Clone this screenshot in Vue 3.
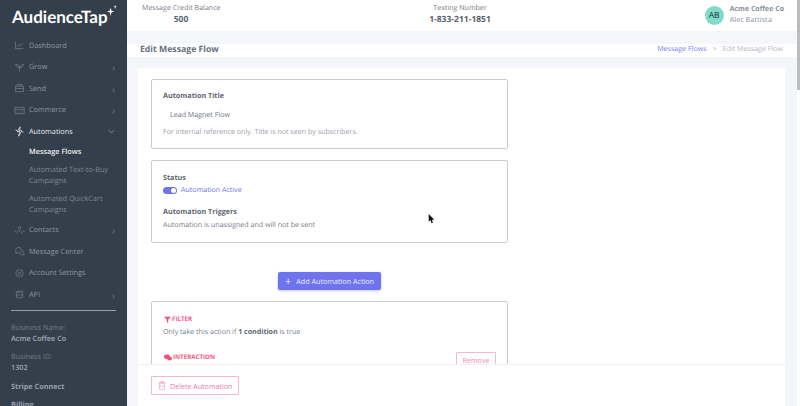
<script setup>
const navTop = [
  { label: 'Dashboard', icon: 'M2 2v9h10M4 8l2-2 2 1 3-3', arrow: false },
  { label: 'Grow', icon: 'M7 12V7M7 7C5 7 3 6 2 3c3 0 5 1 5 4zM7 7c1-2 2-3 5-4 0 3-2 4-5 4z', arrow: true },
  { label: 'Send', icon: 'M2 4h10v7H2zM2 7h10M4 4V2h6v2', arrow: true },
  { label: 'Commerce', icon: 'M1 3h12v8H1zM1 6h12M4 9h1M8 9h2', arrow: true }
]
const navBottom = [
  { label: 'Contacts', icon: 'M7 5a1.5 1.5 0 1 0 0-3 1.5 1.5 0 0 0 0 3zM4 11c0-2 1-4 3-4s3 2 3 4M1 9c0-1 1-2 2-2M13 9c0-1-1-2-2-2', arrow: true },
  { label: 'Message Center', icon: 'M6 2c2.500 0 4 1.500 4 3.500S8.500 9 6 9H2l1-1.500C2 7 2 6 2 5.500 2 3.500 3.500 2 6 2zM11 6c1.500.5 2 2 1.500 3.500l.5 2-2-.5c-1 .5-2.500.3-3.500-.5', arrow: false },
  { label: 'Account Settings', icon: 'M7 1.500l1.500 1.500h2v2L12 7l-1.500 1.500v2h-2L7 12l-1.500-1.500h-2v-2L2 7l1.500-2v-2h2zM7 5.500a1.500 1.500 0 1 0 0 3 1.500 1.500 0 0 0 0-3z', arrow: false },
  { label: 'API', icon: 'M3 3.500C3 2.500 11 2.500 11 3.500v7c0 1-8 1-8 0zM3 3.500c0 1 8 1 8 0M3 7c0 1 8 1 8 0', arrow: true }
]
</script>

<template>
  <div class="app">
    <aside class="sidebar">
      <div class="logo">AudienceTap<svg class="spark" viewBox="0 0 12 12" width="11" height="11"><path d="M5 3l1 3.200L9.200 7 6 8 5 12 4 8 .8 7 4 6.200zM10 0l.5 1.500L12 2l-1.500.5L10 4l-.5-1.500L8 2l1.500-.5z" fill="#fff" /></svg></div>

      <nav class="nav">
        <div v-for="item in navTop" :key="item.label" class="nav-item">
          <svg class="nav-icon" viewBox="0 0 14 14" width="12" height="12"><path :d="item.icon" /></svg>
          <span class="nav-label">{{ item.label }}</span>
          <span v-if="item.arrow" class="chevron">›</span>
        </div>
        <div class="nav-item active">
          <svg class="nav-icon" viewBox="0 0 14 14" width="12" height="12"><path d="M8 1L4 7h3l-1 6 4-7H7zM2 5l2 1M12 8l-2-1" /></svg>
          <span class="nav-label">Automations</span>
          <svg class="chevron-down" viewBox="0 0 8 5" width="7" height="5"><path d="M1 1l3 3 3-3" /></svg>
        </div>
        <div class="sub current">Message Flows</div>
        <div class="sub">Automated Text-to-Buy Campaigns</div>
        <div class="sub last">Automated QuickCart Campaigns</div>
        <div v-for="item in navBottom" :key="item.label" class="nav-item">
          <svg class="nav-icon" viewBox="0 0 14 14" width="12" height="12"><path :d="item.icon" /></svg>
          <span class="nav-label">{{ item.label }}</span>
          <span v-if="item.arrow" class="chevron">›</span>
        </div>
      </nav>

      <div class="side-info">
        <div class="info-label">Business Name:</div>
        <div class="info-value">Acme Coffee Co</div>
        <div class="info-label second">Business ID:</div>
        <div class="info-value">1302</div>
        <div class="info-link first">Stripe Connect</div>
        <div class="info-link">Billing</div>
      </div>
    </aside>

    <div class="main">
      <header class="topbar">
        <div class="stat credit">
          <div class="stat-label">Message Credit Balance</div>
          <div class="stat-value">500</div>
        </div>
        <div class="stat number">
          <div class="stat-label">Texting Number</div>
          <div class="stat-value">1-833-211-1851</div>
        </div>
        <div class="account">
          <div class="avatar">AB</div>
          <div>
            <div class="acct-name">Acme Coffee Co</div>
            <div class="acct-user">Alec Battista</div>
          </div>
        </div>
      </header>

      <div class="page-head">
        <h1>Edit Message Flow</h1>
        <div class="crumbs">
          <span class="crumb-link">Message Flows</span>
          <span class="crumb-sep">&gt;</span>
          <span>Edit Message Flow</span>
        </div>
      </div>

      <div class="content">
        <div class="scroll-area">
          <section class="box title-box">
            <h3>Automation Title</h3>
            <div class="title-value">Lead Magnet Flow</div>
            <p class="hint">For internal reference only. Title is not seen by subscribers.</p>
          </section>

          <section class="box status-box">
            <h3>Status</h3>
            <div class="status-row">
              <span class="toggle"><span class="knob"></span></span>
              <span>Automation Active</span>
            </div>
            <h3 class="triggers">Automation Triggers</h3>
            <p class="body-text">Automation is unassigned and will not be sent</p>
          </section>

          <div class="add-wrap">
            <button class="add-btn"><span class="plus">+</span>Add Automation Action</button>
          </div>

          <section class="box action-box">
            <div class="tag">
              <svg viewBox="0 0 10 10" width="7" height="7"><path d="M0 1h10L6 5.500V10L4 8.500v-3z" fill="#f0527f" /></svg>
              FILTER
            </div>
            <p class="body-text">Only take this action if <b>1 condition</b> is true</p>
            <div class="tag interaction">
              <svg viewBox="0 0 12 10" width="8" height="7"><ellipse cx="4.500" cy="4" rx="4.500" ry="3.500" fill="#f0527f" /><ellipse cx="8.500" cy="6.500" rx="3.500" ry="3" fill="#f0527f" /></svg>
              INTERACTION
            </div>
            <button class="remove-btn">Remove</button>
          </section>
        </div>

        <footer class="footer">
          <button class="delete-btn">
            <svg viewBox="0 0 12 14" width="8" height="9"><path d="M2 3h8v10H2zM1 3h10M4 1h4v2M4.500 6v4M7.500 6v4" /></svg>
            Delete Automation
          </button>
        </footer>
      </div>
    </div>

    <svg class="cursor" viewBox="0 0 10 14" width="7" height="10"><path d="M1 0v11l2.500-2.500L5 13l2-1-1.500-4H9z" fill="#111" /></svg>
    <div class="scrollbar"><div class="thumb"></div></div>
  </div>
</template>

<style>
html, body {
  margin: 0;
  height: 100%;
  overflow: hidden;
  background: #fff;
}
</style>

<style scoped>
.app {
  display: flex;
  width: 800px;
  height: 406px;
  overflow: hidden;
  position: relative;
  font-family: "Open Sans", "Liberation Sans", sans-serif;
  font-size: 7.1px;
  color: #6c757d;
  text-rendering: geometricPrecision;
}

.sidebar {
  width: 127px;
  flex-shrink: 0;
  height: 406px;
  overflow: hidden;
  background: #343f4c;
  color: #8e96a0;
  font-size: 7.3px;
}

.logo {
  display: flex;
  align-items: flex-start;
  height: 35px;
  padding: 5px 0 0 12px;
  font-family: "Lato", "Open Sans", sans-serif;
  font-size: 17px;
  line-height: 24px;
  font-weight: 700;
  color: #fff;
  box-sizing: border-box;
}

.spark {
  margin: 0 0 0 -2px;
}

.nav {
  display: flex;
  flex-direction: column;
}

.nav-item {
  display: flex;
  align-items: center;
  height: 21.5px;
  padding: 0 12px 0 14px;
  flex-shrink: 0;
}

.nav-icon {
  width: 11px;
  height: 11px;
  margin-right: 4px;
  fill: none;
  stroke: #727b86;
  stroke-width: 1;
}

.nav-label {
  flex: 1;
}

.chevron {
  color: #6a737e;
  font-size: 10px;
  line-height: 10px;
}

.nav-item.active {
  color: #e6e9ec;
}

.nav-item.active .nav-icon {
  stroke: #e6e9ec;
}

.chevron-down {
  fill: none;
  stroke: #8e96a0;
  stroke-width: 1;
}

.sub {
  padding: 0 14px 0 29px;
  line-height: 11px;
  margin-bottom: 7px;
  color: #7f8791;
}

.sub.current {
  color: #eceef0;
  font-weight: 600;
  margin: 4px 0 7px;
}

.sub.last {
  margin-bottom: 4px;
}

.side-info {
  margin: 4px 11px 0 11px;
  padding-top: 12px;
  border-top: 1px solid #98a0a9;
  line-height: 11px;
}

.info-label {
  color: #727b86;
}

.info-label.second {
  margin-top: 7px;
}

.info-value {
  color: #a3aab2;
  font-weight: 600;
}

.info-link {
  color: #98a0a9;
  font-weight: 700;
  margin-top: 7px;
}

.info-link.first {
  margin-top: 8px;
}

.main {
  flex: 1;
  min-width: 0;
  display: flex;
  flex-direction: column;
  height: 406px;
  background: #f4f6f9;
}

.topbar {
  position: relative;
  height: 31px;
  flex-shrink: 0;
  display: flex;
  background: #fff;
}

.stat {
  text-align: center;
  padding-top: 2px;
  line-height: 12px;
}

.credit {
  margin-left: 15px;
  width: 78px;
}

.number {
  margin-left: 195px;
  width: 90px;
}

.stat-label {
  white-space: nowrap;
  color: #77808a;
}

.stat-value {
  font-size: 8.5px;
  font-weight: 700;
  color: #59626c;
}

.account {
  margin-left: auto;
  margin-right: 16px;
  display: flex;
  align-items: center;
  gap: 6px;
  padding-bottom: 1px;
}

.avatar {
  width: 19px;
  height: 19px;
  border-radius: 50%;
  background: #7fdcc9;
  color: #1f2933;
  font-size: 8.5px;
  display: flex;
  align-items: center;
  justify-content: center;
}

.acct-name {
  font-size: 7px;
  font-weight: 700;
  color: #868e98;
  line-height: 11px;
}

.acct-user {
  font-size: 7px;
  font-weight: 600;
  color: #a2a9b1;
  line-height: 11px;
}

.page-head {
  height: 37px;
  flex-shrink: 0;
  display: flex;
  align-items: center;
  justify-content: space-between;
  padding: 0 17px 1px 13px;
  background: linear-gradient(#f4f6fa 0, #f4f6fa 13px, #fff 13px, #fff 26px, #f4f6fa 26px);
  box-sizing: border-box;
}

h1 {
  margin: 0;
  font-size: 8.7px;
  font-weight: 700;
  color: #69727c;
}

.crumbs {
  display: flex;
  gap: 6px;
  color: #b2b8bf;
}

.crumb-link {
  color: #7b80f0;
}

.content {
  flex: 1;
  min-height: 0;
  margin-left: 11px;
  margin-right: 15px;
  background: #fff;
  display: flex;
  flex-direction: column;
}

.scroll-area {
  flex: 1;
  min-height: 0;
  overflow: hidden;
  padding: 11px 0 0 13px;
}

.box {
  width: 357px;
  box-sizing: border-box;
  border: 1px solid #c9cdd2;
  border-radius: 2px;
  padding: 10px 11px;
  background: #fff;
}

h3 {
  margin: 0;
  font-size: 7.2px;
  line-height: 12px;
  font-weight: 700;
  color: #5f6872;
}

.title-box {
  height: 70px;
}

.title-value {
  margin: 7px 0 0 7px;
  line-height: 12px;
  color: #6c757d;
}

.hint {
  margin: 5px 0 0;
  line-height: 12px;
  color: #9aa1a9;
}

.status-box {
  height: 83px;
  margin-top: 11px;
  padding-top: 11px;
}

.status-row {
  display: flex;
  align-items: center;
  gap: 4px;
  color: #6f73ee;
  line-height: 12px;
}

.toggle {
  width: 14px;
  height: 7px;
  border-radius: 4px;
  background: #6f73ee;
  position: relative;
}

.knob {
  position: absolute;
  right: 1px;
  top: 1px;
  width: 5px;
  height: 5px;
  border-radius: 50%;
  background: #fff;
}

.triggers {
  margin-top: 10px;
}

.body-text {
  margin: 2px 0 0;
  line-height: 12px;
  color: #77808a;
}

.status-box .body-text {
  margin-top: 1px;
}

b {
  font-weight: 700;
  color: #5f6872;
}

.add-wrap {
  width: 357px;
  display: flex;
  justify-content: center;
  padding: 29px 0 11px;
}

button {
  font-family: inherit;
  cursor: pointer;
}

.add-btn {
  width: 103px;
  height: 18px;
  padding: 0;
  border: none;
  border-radius: 2px;
  background: #6f73ee;
  color: #eceeff;
  font-size: 7.2px;
  white-space: nowrap;
  box-shadow: 0 1px 3px rgba(111, 115, 238, 0.4);
}

.plus {
  font-size: 11px;
  line-height: 10px;
  margin-right: 5px;
  vertical-align: -1px;
}

.action-box {
  position: relative;
  height: 100px;
  padding-top: 12px;
}

.tag {
  display: flex;
  align-items: center;
  gap: 1px;
  font-size: 6.2px;
  font-weight: 700;
  color: #f25a85;
  line-height: 10px;
}

.tag svg {
  margin-left: 1px;
}

.interaction {
  margin-top: 14px;
}

.remove-btn {
  position: absolute;
  right: 11px;
  top: 50px;
  width: 40px;
  height: 17px;
  padding: 0 0 2px;
  background: #fff;
  border: 1px solid #f7b8ca;
  border-radius: 1px;
  color: #f08aa8;
  font-size: 7.2px;
}

.footer {
  position: relative;
  height: 42px;
  flex-shrink: 0;
  background: #fff;
  border-top: 1px solid #eef0f3;
  box-sizing: border-box;
  padding: 11px 0 0 13px;
}

.delete-btn {
  display: flex;
  align-items: center;
  gap: 4px;
  width: 88px;
  height: 19px;
  padding: 0 0 0 6px;
  background: #fff;
  border: 1px solid #f7b8ca;
  border-radius: 1px;
  color: #ee7d9e;
  font-size: 7.1px;
  white-space: nowrap;
}

.delete-btn svg {
  flex-shrink: 0;
  fill: none;
  stroke: #ee9ab3;
  stroke-width: 1;
}

.cursor {
  position: absolute;
  left: 428px;
  top: 214px;
}

.scrollbar {
  position: absolute;
  right: 0;
  top: 0;
  width: 3px;
  height: 406px;
  background: #fff;
}

.thumb {
  height: 90px;
  background: #b9bcc0;
}
</style>
